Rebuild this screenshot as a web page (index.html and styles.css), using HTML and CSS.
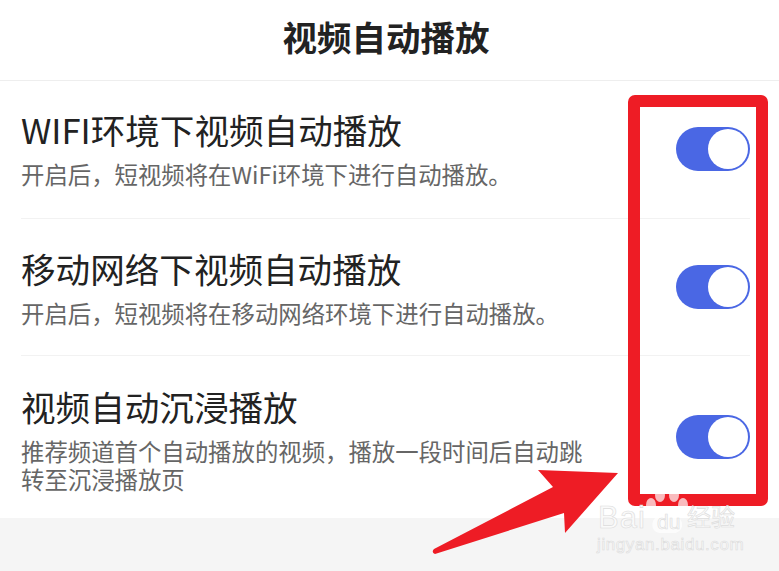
FILE: index.html
```html
<!DOCTYPE html>
<html lang="zh-CN">
<head>
  <meta charset="UTF-8">
  <meta name="viewport" content="width=device-width, initial-scale=1.0">
  <title>视频自动播放</title>
  <link rel="stylesheet" href="styles.css">
</head>
<body>
  <div class="page">
    <header class="top-bar">
      <h1>视频自动播放</h1>
    </header>

    <main class="settings">
      <section class="row row-first">
        <div class="row-text">
          <h2>WIFI环境下视频自动播放</h2>
          <p>开启后，短视频将在WiFi环境下进行自动播放。</p>
        </div>
        <div class="toggle"><span class="knob"></span></div>
      </section>
      <section class="row row-second">
        <div class="row-text">
          <h2>移动网络下视频自动播放</h2>
          <p>开启后，短视频将在移动网络环境下进行自动播放。</p>
        </div>
        <div class="toggle"><span class="knob"></span></div>
      </section>
      <section class="row row-third">
        <div class="row-text">
          <h2>视频自动沉浸播放</h2>
          <p class="narrow">推荐频道首个自动播放的视频，播放一段时间后自动跳转至沉浸播放页</p>
        </div>
        <div class="toggle"><span class="knob"></span></div>
      </section>
    </main>

    <!-- 红色标注 -->
    <div class="mark-box"></div>
    <svg class="mark-arrow" viewBox="0 0 200 100" width="200" height="100">
      <path d="M188 3 L108 0 L123 17 L4 79 Q1 82 5 84 L134 43 L135 63 Z" fill="#ee1c25"/>
    </svg>

    <!-- 水印 -->
    <div class="watermark">
      <svg class="paw" viewBox="0 0 44 50" width="44" height="50">
        <ellipse cx="14" cy="9" rx="5" ry="7"/>
        <ellipse cx="28" cy="9" rx="5" ry="7"/>
        <ellipse cx="5" cy="19" rx="5" ry="7"/>
        <ellipse cx="37" cy="19" rx="5" ry="7"/>
        <path d="M21 22 C15 22 14 28 9 32 C4 37 6 47 14 47 L28 47 C36 47 39 37 33 32 C28 28 27 22 21 22 Z"/>
      </svg>
      <span class="wm-bai">Bai</span>
      <span class="wm-du">du</span>
      <span class="wm-jy">经验</span>
      <span class="wm-url">jingyan.baidu.com</span>
    </div>
  </div>
</body>
</html>
```

FILE: styles.css
```css
* {
  box-sizing: border-box;
}

body {
  margin: 0;
  font-family: "Noto Sans CJK SC", "Liberation Sans", sans-serif;
  background-color: #f5f5f5;
}

.page {
  position: relative;
  width: 779px;
  height: 571px;
  overflow: hidden;
}

.top-bar {
  height: 81px;
  padding-right: 7px;
  background-color: #fff;
  border-bottom: 1px solid #eeeeee;
  display: flex;
  justify-content: center;
}

.top-bar h1 {
  margin: 0;
  font-size: 34.5px;
  font-weight: 700;
  line-height: 72px;
  color: #222;
}

.settings {
  background-color: #fff;
  padding: 0 29px 0 21px;
}

.row {
  display: flex;
  align-items: flex-start;
  justify-content: space-between;
  border-bottom: 1px solid #f2f2f2;
}

.row-first {
  height: 138px;
  padding-top: 25px;
}

.row-second {
  height: 137px;
  padding-top: 26px;
}

.row-third {
  height: 162px;
  padding-top: 27px;
  border-bottom: none;
}

.row-text h2 {
  margin: 0;
  font-size: 34.6px;
  font-weight: 400;
  line-height: 46px;
  color: #222;
}

.row-text p {
  margin: 8px 0 0;
  font-size: 23.4px;
  line-height: 28px;
  color: #666;
}

.row-text p.narrow {
  width: 575px;
}

.toggle {
  flex: none;
  width: 74px;
  height: 44px;
  margin-top: 21px;
  border-radius: 22px;
  background-color: #4a67e4;
  display: flex;
  align-items: center;
  justify-content: flex-end;
  padding-right: 2px;
}

.row-second .toggle {
  margin-top: 20px;
}

.row-third .toggle {
  margin-top: 32px;
}

.knob {
  width: 40px;
  height: 40px;
  border-radius: 50%;
  background-color: #fff;
}

.mark-box {
  position: absolute;
  left: 628px;
  top: 95px;
  width: 140px;
  height: 411px;
  border: 12px solid #ee1c25;
  border-radius: 7px;
}

.mark-arrow {
  position: absolute;
  left: 430px;
  top: 470px;
}

.watermark {
  position: absolute;
  left: 596px;
  top: 486px;
  width: 145px;
  height: 85px;
  font-family: "Liberation Sans", "Noto Sans CJK SC", sans-serif;
  color: #fafafa;
  white-space: nowrap;
}

.watermark span {
  position: absolute;
  -webkit-text-stroke: 0.6px #dcdcdc;
}

.paw {
  position: absolute;
  left: 50px;
  top: 0;
  fill: #fff;
  opacity: 0.7;
}

.wm-bai {
  left: 2px;
  top: 14px;
  font-size: 31px;
  line-height: 36px;
  letter-spacing: 1px;
}

.wm-du {
  left: 61px;
  top: 24px;
  font-size: 21px;
  line-height: 24px;
}

.wm-jy {
  left: 91px;
  top: 17px;
  font-size: 24px;
  line-height: 30px;
}

.wm-url {
  left: 1px;
  top: 49px;
  font-size: 17px;
  line-height: 20px;
  letter-spacing: 0.6px;
}
```
